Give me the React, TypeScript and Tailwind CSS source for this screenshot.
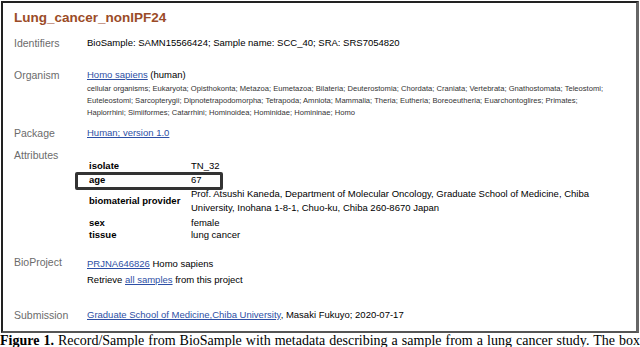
type Attr = { key: string; value: React.ReactNode; pad: string };

const ATTRS: Attr[] = [
  { key: "isolate", value: "TN_32", pad: "py-[1px]" },
  { key: "age", value: "67", pad: "py-[1px]" },
  {
    key: "biomaterial provider",
    value: (
      <div className="leading-[14px]">
        Prof. Atsushi Kaneda, Department of Molecular Oncology, Graduate School of Medicine, Chiba
        <br />
        University, Inohana 1-8-1, Chuo-ku, Chiba 260-8670 Japan
      </div>
    ),
    pad: "pb-[2px]",
  },
  { key: "sex", value: "female", pad: "py-0" },
  { key: "tissue", value: "lung cancer", pad: "py-0" },
];

const LINEAGE = [
  "cellular organisms; Eukaryota; Opisthokonta; Metazoa; Eumetazoa; Bilateria; Deuterostomia; Chordata; Craniata; Vertebrata; Gnathostomata; Teleostomi;",
  "Euteleostomi; Sarcopterygii; Dipnotetrapodomorpha; Tetrapoda; Amniota; Mammalia; Theria; Eutheria; Boreoeutheria; Euarchontoglires; Primates;",
  "Haplorrhini; Simiiformes; Catarrhini; Hominoidea; Hominidae; Homininae; Homo",
];

const LINK = "text-[#2d4fa5] underline underline-offset-1";

function Row({ label, className, children }: { label: string; className?: string; children: React.ReactNode }) {
  return (
    <div className={"flex " + (className ?? "")}>
      <div className="w-[73px] shrink-0 text-[10.5px] leading-[12px] text-[#6b6b6b]">{label}</div>
      <div className="min-w-0 flex-1 text-[9.5px] leading-[12px] text-black">{children}</div>
    </div>
  );
}

export default function App() {
  return (
    <div className="h-[347px] w-[640px] overflow-hidden bg-white font-['Liberation_Sans',Arial,sans-serif]">
      <div className="ml-[1px] mt-[1px] h-[332px] w-[638px] border-b-2 border-l-2 border-r-[3px] border-t-2 border-b-[#555] border-l-[#222] border-r-[#666] border-t-[#222] pl-[11px] pt-[7px]">
        <h1 className="text-[13.5px] font-bold leading-[16px] text-[#9b4b27]">Lung_cancer_nonIPF24</h1>

        <Row label="Identifiers" className="mt-[11px]">
          BioSample: SAMN15566424; Sample name: SCC_40; SRA: SRS7054820
        </Row>

        <Row label="Organism" className="mt-[20px]">
          <span className={LINK}>Homo sapiens</span> (human)
          <div className="mt-[2px] text-[7.6px] leading-[12px] text-[#333]">
            {LINEAGE.map((l) => (
              <div key={l} className="whitespace-nowrap">
                {l}
              </div>
            ))}
          </div>
        </Row>

        <Row label="Package" className="mt-[8px]">
          <span className={LINK}>Human; version 1.0</span>
        </Row>

        <Row label="Attributes" className="mt-[10px]">
          <div className="relative mt-[10px]">
            {ATTRS.map((a) => (
              <div key={a.key} className={"flex items-center " + a.pad}>
                <div className="w-[104px] shrink-0 pl-[2px] font-bold">{a.key}</div>
                <div className="flex-1">{a.value}</div>
              </div>
            ))}
            <div className="pointer-events-none absolute left-[-12px] top-[13px] h-[18px] w-[148px] rounded-[2px] border-[3px] border-[#333]" />
          </div>
        </Row>

        <Row label="BioProject" className="mt-[15px]">
          <div className="leading-[16px]">
            <span className={LINK}>PRJNA646826</span> Homo sapiens
          </div>
          <div className="leading-[16px]">
            Retrieve <span className={LINK}>all samples</span> from this project
          </div>
        </Row>

        <Row label="Submission" className="mt-[21px]">
          <span className={LINK}>Graduate School of Medicine,Chiba University</span>, Masaki Fukuyo; 2020-07-17
        </Row>
      </div>

      <p className="mt-[1px] w-[640px] text-justify font-['Liberation_Serif','Times_New_Roman',serif] text-[14px] leading-[14px] text-black [text-align-last:justify]">
        <b>Figure 1.</b> Record/Sample from BioSample with metadata describing a sample from a lung cancer study. The box
      </p>
    </div>
  );
}
